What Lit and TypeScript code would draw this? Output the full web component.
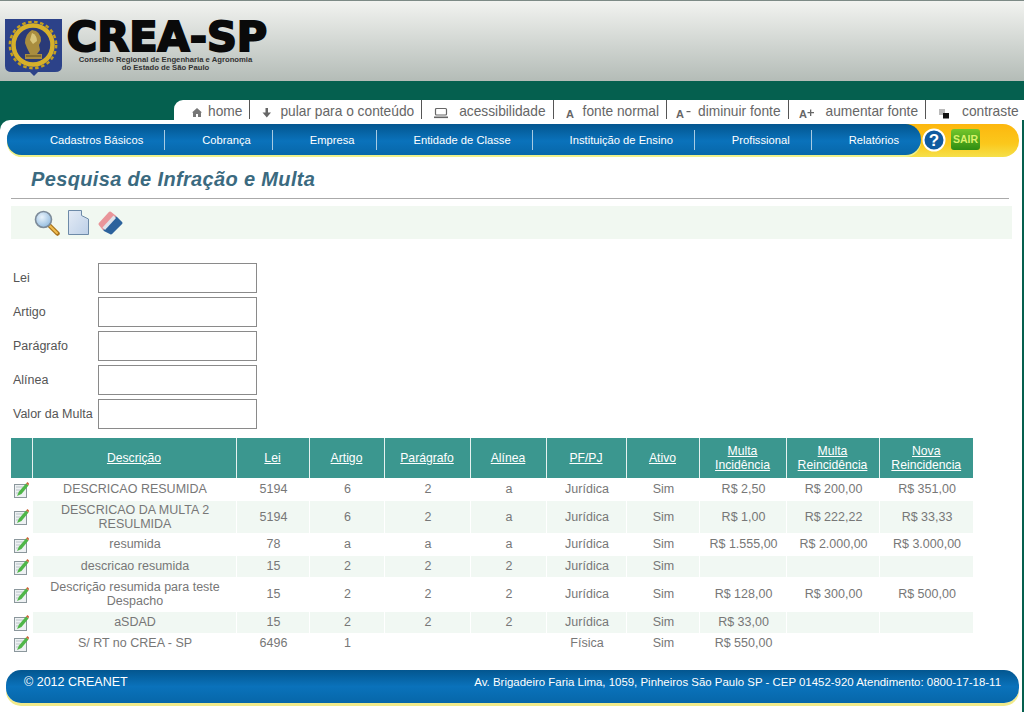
import { LitElement, html, css, svg } from "lit";
import { customElement } from "lit/decorators.js";

const linkIcons: Record<string, unknown> = {
  home: svg`<path d="M0 5.5 5 1 10 5.5H9V10H6V7H4V10H1V5.5Z" fill="#777"/>`,
  down: svg`<path d="M3.5 1H6V5.5H9L4.8 10.5 .5 5.5H3.5Z" fill="#666"/>`,
  laptop: svg`<rect x="1.5" y="1.5" width="11" height="6.5" rx="1" fill="none" stroke="#666" stroke-width="1.2"/><rect x="0" y="9.5" width="14" height="1.6" fill="#666"/>`,
  a: svg`<text x="0" y="11" font-family="Liberation Sans" font-weight="700" font-size="11" fill="#666">A</text>`,
  aminus: svg`<text x="0" y="11" font-family="Liberation Sans" font-weight="700" font-size="11" fill="#666">A</text><rect x="10.5" y="4" width="4" height="1.2" fill="#666"/>`,
  aplus: svg`<text x="0" y="11" font-family="Liberation Sans" font-weight="700" font-size="11" fill="#666">A</text><path d="M11 2.5H12.3V5H15V6.2H12.3V9H11V6.2H8.5V5H11Z" fill="#666"/>`,
  contrast: svg`<rect x="1" y="2" width="6" height="6" fill="#bbb"/><rect x="5" y="6" width="6" height="5.5" fill="#111"/>`,
};

const links = [
  { icon: "home", label: "home", box: 34, x: 18 },
  { icon: "down", label: "pular para o conteúdo", box: 30, x: 12 },
  { icon: "laptop", label: "acessibilidade", box: 37, x: 12 },
  { icon: "a", label: "fonte normal", box: 29, x: 12 },
  { icon: "aminus", label: "diminuir fonte", box: 31, x: 9 },
  { icon: "aplus", label: "aumentar fonte", box: 37, x: 10 },
  { icon: "contrast", label: "contraste", box: 36, x: 12 },
];

const menu = [
  "Cadastros Básicos",
  "Cobrança",
  "Empresa",
  "Entidade de Classe",
  "Instituição de Ensino",
  "Profissional",
  "Relatórios",
];

const fields = ["Lei", "Artigo", "Parágrafo", "Alínea", "Valor da Multa"];

const columns = [
  { w: 21, t: "" },
  { w: 204, t: "Descrição" },
  { w: 73, t: "Lei" },
  { w: 75, t: "Artigo" },
  { w: 86, t: "Parágrafo" },
  { w: 76, t: "Alínea" },
  { w: 80, t: "PF/PJ" },
  { w: 73, t: "Ativo" },
  { w: 87, t: "Multa Incidência" },
  { w: 93, t: "Multa Reincidência" },
  { w: 94, t: "Nova Reincidencia" },
];

const rows = [
  { h: 23, c: ["DESCRICAO RESUMIDA", "5194", "6", "2", "a", "Jurídica", "Sim", "R$ 2,50", "R$ 200,00", "R$ 351,00"] },
  { h: 32, c: ["DESCRICAO DA MULTA 2 RESULMIDA", "5194", "6", "2", "a", "Jurídica", "Sim", "R$ 1,00", "R$ 222,22", "R$ 33,33"] },
  { h: 23, c: ["resumida", "78", "a", "a", "a", "Jurídica", "Sim", "R$ 1.555,00", "R$ 2.000,00", "R$ 3.000,00"] },
  { h: 21, c: ["descricao resumida", "15", "2", "2", "2", "Jurídica", "Sim", "", "", ""] },
  { h: 35, c: ["Descrição resumida para teste Despacho", "15", "2", "2", "2", "Jurídica", "Sim", "R$ 128,00", "R$ 300,00", "R$ 500,00"] },
  { h: 21, c: ["aSDAD", "15", "2", "2", "2", "Jurídica", "Sim", "R$ 33,00", "", ""] },
  { h: 21, c: ["S/ RT no CREA - SP", "6496", "1", "", "", "Física", "Sim", "R$ 550,00", "", ""] },
];

@customElement("app-root")
export class AppRoot extends LitElement {
  static styles = css`
    :host {
      display: block;
      height: 712px;
      overflow: hidden;
      background: #05604f;
      font-family: "Liberation Sans", Arial, sans-serif;
      font-size: 12.5px;
      color: #777;
    }
    .header {
      height: 81px;
      border-top: 1px solid #7d8a86;
      background: linear-gradient(#f2f3f0 0%, #b4bcb7 100%);
      display: flex;
      padding: 17px 0 0 5px;
      box-sizing: border-box;
      gap: 5px;
    }
    .brand {
      display: flex;
      flex-direction: column;
      align-items: center;
      width: 198px;
    }
    .brand-name {
      font-family: "DejaVu Sans", sans-serif;
      font-size: 41.5px;
      line-height: 38px;
      font-weight: 700;
      color: #0a0a0a;
      -webkit-text-stroke: 2px #0a0a0a;
      white-space: nowrap;
    }
    .brand-sub {
      margin-right: 3px;
      font-size: 7.7px;
      line-height: 7.5px;
      font-weight: 700;
      color: #333;
      text-align: center;
      white-space: nowrap;
    }
    .band {
      height: 39px;
      display: flex;
      align-items: flex-end;
      padding-left: 174px;
    }
    .links {
      flex: 1;
      height: 20px;
      background: #fff;
      border-top-left-radius: 9px;
      display: flex;
      font-size: 13.75px;
      line-height: 23px;
      color: #666;
    }
    .link {
      display: flex;
      height: 19px;
      padding-right: 7px;
      border-right: 1px solid #555;
      white-space: nowrap;
    }
    .link:last-child {
      border-right: 0;
    }
    .link-icon {
      flex: none;
      box-sizing: border-box;
      padding-top: 7px;
    }
    .link-icon svg {
      display: block;
    }
    .main {
      margin-right: 2px;
      height: 592px;
      background: #fff;
      border-top-left-radius: 10px;
      padding-top: 4px;
      box-sizing: border-box;
    }
    .navbar {
      margin: 0 3px 0 7px;
      height: 33px;
      display: flex;
      background: linear-gradient(#fdb70e, #fbc81c 60%, #f5e04a);
      border-radius: 16px;
    }
    .nav {
      width: 914px;
      height: 31px;
      display: flex;
      align-items: center;
      padding-left: 6px;
      box-sizing: border-box;
      background: linear-gradient(#03568f 0%, #0a72bb 55%, #0767a9 100%);
      border-radius: 15px 16px 16px 15px;
      box-shadow: 0 2px 0 #eef08c;
      color: #fff;
      font-size: 11.2px;
    }
    .nav-item {
      height: 20px;
      line-height: 20px;
      padding: 0 21px 0 37px;
      border-right: 1px solid #a8cbe3;
      white-space: nowrap;
    }
    .nav-item:last-child {
      border-right: 0;
    }
    .nav-actions {
      display: flex;
      align-items: center;
      gap: 5px;
      padding: 0 0 2px 1px;
    }
    .sair {
      width: 29px;
      height: 21px;
      border-radius: 3px;
      background: linear-gradient(#74c62b, #2f8d12);
      color: #d9f26a;
      font-size: 10.5px;
      font-weight: 700;
      line-height: 20px;
      text-align: center;
    }
    .title {
      margin: 0 13px 0 11px;
      height: 41px;
      border-bottom: 1px solid #aaa;
      padding-left: 20px;
      font-size: 20px;
      line-height: 44px;
      font-weight: 700;
      font-style: italic;
      color: #3b6a80;
      letter-spacing: 0.35px;
    }
    .toolbar {
      margin: 7px 10px 0 11px;
      height: 33px;
      background: #f1f8f1;
      display: flex;
      align-items: center;
      gap: 8px;
      padding-left: 23px;
    }
    .form {
      margin: 24px 0 0 13px;
      display: grid;
      grid-template-columns: 85px 159px;
      row-gap: 4px;
      align-items: center;
    }
    .form input {
      width: 159px;
      height: 30px;
      box-sizing: border-box;
      border: 1px solid #8a8a8a;
      background: #fff;
      margin: 0;
      padding: 0;
      outline: none;
    }
    .form label {
      color: #555;
      white-space: nowrap;
    }
    table {
      margin: 9px 0 0 11px;
      width: 962px;
      table-layout: fixed;
      border-collapse: collapse;
      text-align: center;
    }
    th {
      height: 40px;
      padding: 0 2px;
      background: #3b978f;
      border-right: 1px solid #e6f2f0;
      font-size: 12.2px;
      font-weight: 400;
      line-height: 14px;
      color: #fff;
      text-decoration: underline;
    }
    th:last-child {
      border-right: 0;
    }
    td {
      padding: 0 2px 1px 4px;
      line-height: 14px;
      border-right: 1px solid #fff;
    }
    td:first-child {
      padding: 0;
      background: #fff;
      text-align: left;
    }
    td:first-child svg {
      display: block;
      margin-left: 3px;
    }
    tbody tr:nth-child(even) td:not(:first-child) {
      background: #f1f8f3;
    }
    .footer {
      margin: 16px 3px 0 6px;
      height: 33px;
      display: flex;
      justify-content: space-between;
      padding: 5px 18px 0 18px;
      box-sizing: border-box;
      background: linear-gradient(#03568f 0%, #0a72bb 50%, #0767a9 100%);
      border-radius: 15px;
      box-shadow: 0 3px 0 #f1ea8a;
      color: #fff;
      font-size: 11.45px;
      line-height: 14px;
    }
    .footer .copy {
      font-size: 12.5px;
    }
  `;

  private shield() {
    return html`<svg width="58" height="60" viewBox="0 0 58 60">
      <path d="M0 1H57V48Q57 54 50 54H33L29 58 25 54H7Q0 54 0 48Z" fill="#2c4289"/>
      <circle cx="28" cy="27" r="23.2" fill="none" stroke="#c49f1f" stroke-width="2.4" stroke-dasharray="3.5 2.6"/>
      <circle cx="28" cy="27" r="19.5" fill="none" stroke="#d6b02a" stroke-width="4.5"/>
      <circle cx="28" cy="27" r="16.8" fill="#2a3a78"/>
      <path d="M27 12Q36 13 36 23L34 27 35 32 32 36H37V41H20V36H25L22 30 20 25Q20 16 27 12Z" fill="#a98d3f"/>
      <path d="M27 15Q32 17 32 23L28 26 25 22Z" fill="#d8c57a"/>
      <path d="M21 38H36" stroke="#5d4d20"/>
    </svg>`;
  }

  private magnifier() {
    return html`<svg width="26" height="26" viewBox="0 0 26 26">
      <defs>
        <radialGradient id="glass" cx="40%" cy="35%" r="70%">
          <stop offset="0" stop-color="#eaf4fc"/>
          <stop offset="1" stop-color="#8fb9de"/>
        </radialGradient>
      </defs>
      <path d="M15 15 23.5 23.5" stroke="#a8741c" stroke-width="4.5" stroke-linecap="round"/>
      <path d="M16 16 23 23" stroke="#f1bd50" stroke-width="2" stroke-linecap="round"/>
      <circle cx="9.5" cy="9.5" r="8" fill="url(#glass)" stroke="#7d8b99" stroke-width="1.6"/>
    </svg>`;
  }

  private page() {
    return html`<svg width="21" height="25" viewBox="0 0 21 25">
      <defs>
        <linearGradient id="sheet" x1="0" y1="0" x2="1" y2="1">
          <stop offset="0" stop-color="#e4ebf5"/>
          <stop offset="1" stop-color="#bdd0e8"/>
        </linearGradient>
      </defs>
      <path d="M.5.5H13.5V5.5L20.5 9V24.5H.5Z" fill="url(#sheet)" stroke="#6d8aa8"/>
    </svg>`;
  }

  private eraser() {
    return html`<svg width="27" height="26" viewBox="0 0 27 26">
      <path d="M3 14 13 3 18 7 7 19Z" fill="#e9959a" stroke="#e9959a" stroke-width="3" stroke-linejoin="round"/>
      <path d="M8 20 19 8 24 13 14 23Z" fill="#2c629c" stroke="#2c629c" stroke-width="3" stroke-linejoin="round"/>
      <path d="M5.5 17.5 16.5 5.5 19 8 8 20Z" fill="#dfe3ea"/>
    </svg>`;
  }

  private editIcon() {
    return html`<svg width="15" height="16" viewBox="0 0 15 16">
      <rect x=".5" y="2.5" width="12" height="13" fill="#eef1f3" stroke="#8b979c"/>
      <path d="M2 5H9M2 8H6M2 11H5" stroke="#b9c3c7"/>
      <path d="M3 14 5 9.5 12 1.5 14.5 3.5 7.5 12Z" fill="#4fb648"/>
      <path d="M12 1.5 13.5 0 15 1.5 14.5 3.5Z" fill="#c8663a"/>
    </svg>`;
  }

  private helpIcon() {
    return html`<svg width="24" height="24" viewBox="0 0 24 24">
      <circle cx="12" cy="12" r="10.5" fill="#0f5aa0" stroke="#fff" stroke-width="2"/>
      <text x="12" y="18" text-anchor="middle" font-family="Liberation Sans" font-weight="700" font-size="17" fill="#fff">?</text>
    </svg>`;
  }

  render() {
    return html`
      <div class="header">
        ${this.shield()}
        <div class="brand">
          <div class="brand-name">CREA-SP</div>
          <div class="brand-sub">Conselho Regional de Engenharia e Agronomia<br />do Estado de São Paulo</div>
        </div>
      </div>
      <div class="band">
        <div class="links">
          ${links.map(
            (l) => html`<div class="link">
              <span class="link-icon" style="width:${l.box}px;padding-left:${l.x}px">
                <svg width="16" height="12" viewBox="0 0 16 12">${linkIcons[l.icon]}</svg>
              </span>
              ${l.label}
            </div>`
          )}
        </div>
      </div>
      <div class="main">
        <div class="navbar">
          <div class="nav">
            ${menu.map((m) => html`<div class="nav-item">${m}</div>`)}
          </div>
          <div class="nav-actions">
            ${this.helpIcon()}
            <div class="sair">SAIR</div>
          </div>
        </div>
        <div class="title">Pesquisa de Infração e Multa</div>
        <div class="toolbar">${this.magnifier()}${this.page()}${this.eraser()}</div>
        <div class="form">
          ${fields.map((f) => html`<label>${f}</label><input type="text" />`)}
        </div>
        <table>
          <colgroup>
            ${columns.map((c) => html`<col style="width:${c.w}px" />`)}
          </colgroup>
          <thead>
            <tr>${columns.map((c) => html`<th>${c.t}</th>`)}</tr>
          </thead>
          <tbody>
            ${rows.map(
              (r) => html`<tr style="height:${r.h}px">
                <td>${this.editIcon()}</td>
                ${r.c.map((v) => html`<td>${v}</td>`)}
              </tr>`
            )}
          </tbody>
        </table>
        <div class="footer">
          <span class="copy">© 2012 CREANET</span>
          <span>Av. Brigadeiro Faria Lima, 1059, Pinheiros São Paulo SP - CEP 01452-920 Atendimento: 0800-17-18-11</span>
        </div>
      </div>
    `;
  }
}
